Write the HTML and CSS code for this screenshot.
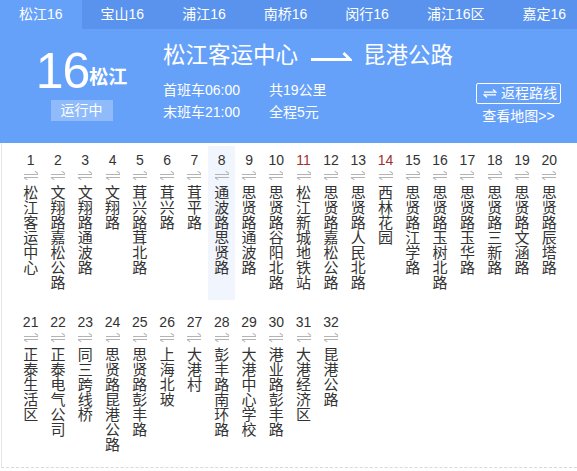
FILE: index.html
```html
<!DOCTYPE html>
<html lang="zh">
<head>
<meta charset="utf-8">
<title>松江16</title>
<link rel="stylesheet" href="styles.css">
</head>
<body>
<nav class="tabs">
  <a class="tab active">松江16</a>
  <a class="tab">宝山16</a>
  <a class="tab">浦江16</a>
  <a class="tab">南桥16</a>
  <a class="tab">闵行16</a>
  <a class="tab">浦江16区</a>
  <a class="tab">嘉定16</a>
</nav>
<header class="head">
  <div class="line-id">
    <div class="line-name"><span class="big">16</span><span class="dist">松江</span></div>
    <span class="status">运行中</span>
  </div>
  <div class="info">
    <div class="title">松江客运中心<svg class="dir" width="42" height="12" viewBox="0 0 42 12"><path d="M1 9.5H40L33.5 3" fill="none" stroke="#fff" stroke-width="2.8"/></svg>昆港公路</div>
    <div class="meta">
      <span>首班车06:00</span><span>共19公里</span>
      <span>末班车21:00</span><span>全程5元</span>
    </div>
  </div>
  <div class="actions">
    <a class="back"><svg width="14" height="9" viewBox="0 0 14 9"><path d="M1 3.2H13L10 0.6M13 5.8H1L4 8.4" fill="none" stroke="#fff" stroke-width="1.3"/></svg>返程路线</a>
    <a class="map">查看地图&gt;&gt;</a>
  </div>
</header>
<main class="stops">
  <div class="grid">
    <div class="stop"><span class="no">1</span><i></i><span class="nm">松江客运中心</span></div>
    <div class="stop"><span class="no">2</span><i></i><span class="nm">文翔路嘉松公路</span></div>
    <div class="stop"><span class="no">3</span><i></i><span class="nm">文翔路通波路</span></div>
    <div class="stop"><span class="no">4</span><i></i><span class="nm">文翔路</span></div>
    <div class="stop"><span class="no">5</span><i></i><span class="nm">茸兴路茸北路</span></div>
    <div class="stop"><span class="no">6</span><i></i><span class="nm">茸兴路</span></div>
    <div class="stop"><span class="no">7</span><i></i><span class="nm">茸平路</span></div>
    <div class="stop cur"><span class="no">8</span><i></i><span class="nm">通波路思贤路</span></div>
    <div class="stop"><span class="no">9</span><i></i><span class="nm">思贤路通波路</span></div>
    <div class="stop"><span class="no">10</span><i></i><span class="nm">思贤路谷阳北路</span></div>
    <div class="stop metro"><span class="no">11</span><i></i><span class="nm">松江新城地铁站</span></div>
    <div class="stop"><span class="no">12</span><i></i><span class="nm">思贤路嘉松公路</span></div>
    <div class="stop"><span class="no">13</span><i></i><span class="nm">思贤路人民北路</span></div>
    <div class="stop metro"><span class="no">14</span><i></i><span class="nm">西林花园</span></div>
    <div class="stop"><span class="no">15</span><i></i><span class="nm">思贤路江学路</span></div>
    <div class="stop"><span class="no">16</span><i></i><span class="nm">思贤路玉树北路</span></div>
    <div class="stop"><span class="no">17</span><i></i><span class="nm">思贤路玉华路</span></div>
    <div class="stop"><span class="no">18</span><i></i><span class="nm">思贤路三新路</span></div>
    <div class="stop"><span class="no">19</span><i></i><span class="nm">思贤路文涵路</span></div>
    <div class="stop"><span class="no">20</span><i></i><span class="nm">思贤路辰塔路</span></div>
    <div class="stop"><span class="no">21</span><i></i><span class="nm">正泰生活区</span></div>
    <div class="stop"><span class="no">22</span><i></i><span class="nm">正泰电气公司</span></div>
    <div class="stop"><span class="no">23</span><i></i><span class="nm">同三跨线桥</span></div>
    <div class="stop"><span class="no">24</span><i></i><span class="nm">思贤路昆港公路</span></div>
    <div class="stop"><span class="no">25</span><i></i><span class="nm">思贤路彭丰路</span></div>
    <div class="stop"><span class="no">26</span><i></i><span class="nm">上海北玻</span></div>
    <div class="stop"><span class="no">27</span><i></i><span class="nm">大港村</span></div>
    <div class="stop"><span class="no">28</span><i></i><span class="nm">彭丰路南环路</span></div>
    <div class="stop"><span class="no">29</span><i></i><span class="nm">大港中心学校</span></div>
    <div class="stop"><span class="no">30</span><i></i><span class="nm">港业路彭丰路</span></div>
    <div class="stop"><span class="no">31</span><i></i><span class="nm">大港经济区</span></div>
    <div class="stop"><span class="no">32</span><i></i><span class="nm">昆港公路</span></div>
  </div>
</main>
</body>
</html>
```
FILE: styles.css
```css
* { box-sizing: border-box; }
html, body { margin: 0; padding: 0; background: #fff; }
body {
  font-family: "Liberation Sans", "Noto Sans CJK SC", sans-serif;
  color: #333;
  width: 577px;
}
a { color: inherit; text-decoration: none; }

.tabs {
  display: flex;
  height: 29px;
  background: #5993ed;
}
.tab {
  padding: 0 19px;
  font-size: 14px;
  line-height: 29px;
  color: #fff;
  white-space: nowrap;
}
.tab.active { background: #66a1f9; }

.head {
  display: flex;
  height: 114px;
  background: #66a1f9;
  color: #fff;
}
.line-id {
  width: 163px;
  display: flex;
  flex-direction: column;
  align-items: center;
  padding-top: 17px;
}
.line-name {
  height: 54px;
  line-height: 50px;
  white-space: nowrap;
}
.big {
  font-size: 50px;
  letter-spacing: -1px;
}
.dist {
  font-size: 19px;
  font-weight: bold;
  vertical-align: 4px;
}
.status {
  width: 62px;
  height: 21px;
  background: #8fbbfb;
  font-size: 14px;
  line-height: 21px;
  text-align: center;
}
.info {
  flex: 1;
  padding-top: 12px;
}
.title {
  font-size: 22.5px;
  line-height: 30px;
  display: flex;
  align-items: center;
  white-space: nowrap;
}
.dir { margin: 0 11px 0 12px; }
.meta {
  margin-top: 8px;
  display: grid;
  grid-template-columns: 106px auto;
  font-size: 14px;
  line-height: 22px;
}
.actions {
  width: 101px;
  padding-top: 54px;
  padding-right: 16px;
  display: flex;
  flex-direction: column;
  align-items: center;
}
.back {
  display: flex;
  align-items: center;
  gap: 4px;
  width: 85px;
  height: 21px;
  border: 1px solid #fff;
  border-radius: 2px;
  padding-left: 6px;
  font-size: 14px;
  line-height: 19px;
}
.map {
  margin-top: 4px;
  font-size: 14px;
  line-height: 16px;
}

.stops {
  margin-left: 1px;
  border-left: 1px solid #e6e6e6;
  border-bottom: 1px dashed #d9d9d9;
  padding: 3px 0 5px 15px;
}
.grid {
  display: grid;
  grid-template-columns: repeat(20, 27.3px);
  row-gap: 8px;
}
.stop {
  display: flex;
  flex-direction: column;
  align-items: center;
  padding: 6px 0 10px;
}
.stop.cur { background: #f1f6fe; }
.no {
  font-size: 14px;
  line-height: 17px;
  color: #333;
}
.metro .no { color: #a3302f; }
.stop i {
  display: block;
  width: 14px;
  height: 7px;
  margin: 3px 0 6px;
  background:
    linear-gradient(#b3b3b3, #b3b3b3) 0 2px / 14px 1px no-repeat,
    linear-gradient(#b3b3b3, #b3b3b3) 0 5px / 14px 1px no-repeat;
  position: relative;
}
.stop i::before,
.stop i::after {
  content: "";
  position: absolute;
  width: 4px;
  height: 1px;
  background: #b3b3b3;
}
.stop i::before { right: 0; top: 1px; transform: rotate(35deg); transform-origin: right center; }
.stop i::after { left: 0; top: 5px; transform: rotate(35deg); transform-origin: left center; }
.nm {
  width: 15px;
  font-size: 15px;
  line-height: 15px;
  color: #333;
  word-break: break-all;
}
```
